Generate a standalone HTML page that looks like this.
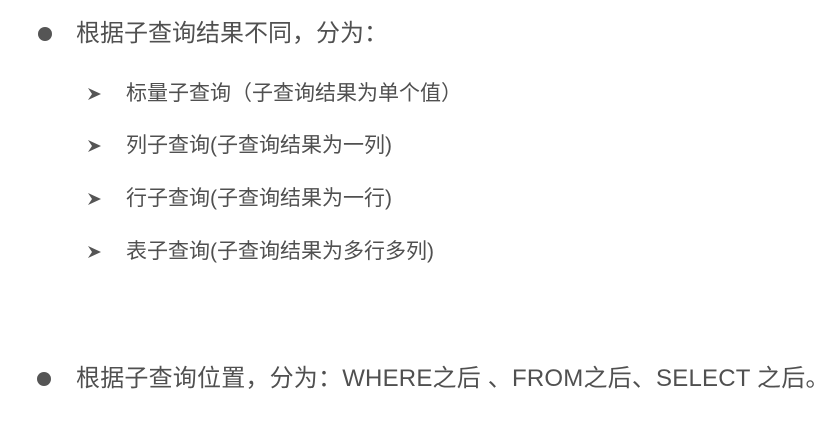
<!DOCTYPE html>
<html><head><meta charset="utf-8"><style>
body{margin:0;width:837px;height:447px;background:#fff;position:relative;overflow:hidden;font-family:"Liberation Sans","Noto Sans CJK SC",sans-serif;color:#505050}
.t{position:absolute;white-space:nowrap;line-height:1}
.dot{position:absolute;width:14px;height:14px;border-radius:50%;background:#555}
.a{position:absolute;width:15px;height:14px}
</style></head><body>
<div class="dot" style="left:38px;top:27px"></div>
<div class="t" style="left:76px;top:22px;font-size:24px">根据子查询结果不同，分为：</div>
<svg class="a" style="left:87px;top:87px" viewBox="0 0 15 14"><path d="M1 1 L14 7 L1 13 L5 7 Z" fill="#555"/></svg>
<div class="t" style="left:126px;top:83px;font-size:21px">标量子查询（子查询结果为单个值）</div>
<svg class="a" style="left:87px;top:139px" viewBox="0 0 15 14"><path d="M1 1 L14 7 L1 13 L5 7 Z" fill="#555"/></svg>
<div class="t" style="left:126px;top:135px;font-size:21px">列子查询(子查询结果为一列)</div>
<svg class="a" style="left:87px;top:192px" viewBox="0 0 15 14"><path d="M1 1 L14 7 L1 13 L5 7 Z" fill="#555"/></svg>
<div class="t" style="left:126px;top:188px;font-size:21px">行子查询(子查询结果为一行)</div>
<svg class="a" style="left:87px;top:245px" viewBox="0 0 15 14"><path d="M1 1 L14 7 L1 13 L5 7 Z" fill="#555"/></svg>
<div class="t" style="left:126px;top:241px;font-size:21px">表子查询(子查询结果为多行多列)</div>
<div class="dot" style="left:37px;top:372px"></div>
<div class="t" style="left:76px;top:367px;font-size:24px;letter-spacing:0.2px">根据子查询位置，分为：WHERE之后 、FROM之后、SELECT 之后。</div>
</body></html>
